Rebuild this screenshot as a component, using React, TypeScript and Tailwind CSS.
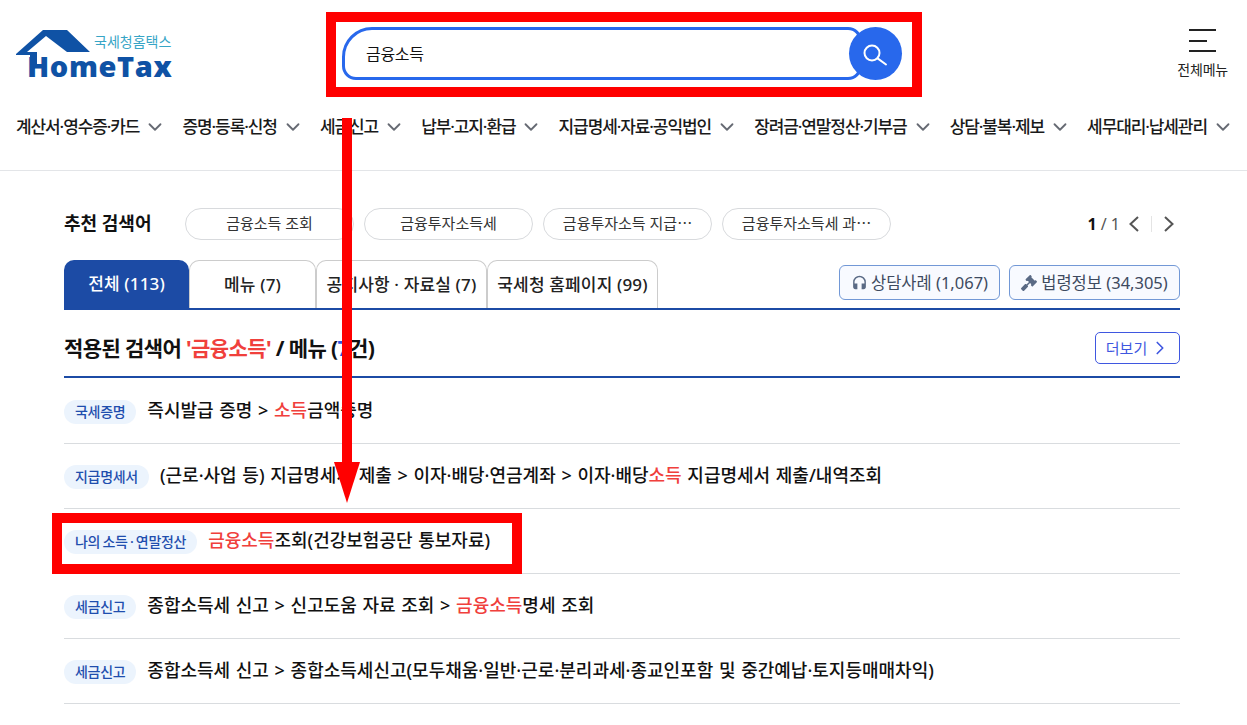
import { ChevronDown, ChevronRight } from "lucide-react";
import { FaGavel } from "react-icons/fa";
import { MdHeadset } from "react-icons/md";

const navItems = [
  "계산서·영수증·카드",
  "증명·등록·신청",
  "세금신고",
  "납부·고지·환급",
  "지급명세·자료·공익법인",
  "장려금·연말정산·기부금",
  "상담·불복·제보",
  "세무대리·납세관리",
];

const chips = ["금융소득 조회", "금융투자소득세", "금융투자소득 지급⋯", "금융투자소득세 과⋯"];

const tabs = [
  { label: "전체 (113)", width: "w-[125px]", active: true },
  { label: "메뉴 (7)", width: "w-[127px]", active: false },
  { label: "공지사항 · 자료실 (7)", width: "w-[171px]", active: false },
  { label: "국세청 홈페이지 (99)", width: "w-[171px]", active: false },
];

const results = [
  { tag: "국세증명", parts: ["즉시발급 증명 > ", "소득", "금액증명"] },
  { tag: "지급명세서", parts: ["(근로·사업 등) 지급명세서 제출 > 이자·배당·연금계좌 > 이자·배당", "소득", " 지급명세서 제출/내역조회"] },
  { tag: "나의 소득 · 연말정산", parts: ["", "금융소득", "조회(건강보험공단 통보자료)"] },
  { tag: "세금신고", parts: ["종합소득세 신고 > 신고도움 자료 조회 > ", "금융소득", "명세 조회"] },
  { tag: "세금신고", parts: ["종합소득세 신고 > 종합소득세신고(모두채움·일반·근로·분리과세·종교인포함 및 중간예납·토지등매매차익)", "", ""] },
];

function Logo() {
  return (
    <div className="relative h-[50px] w-[160px] shrink-0">
      <svg className="absolute left-0 top-0" width="92" height="50" viewBox="0 0 92 50">
        <path
          d="M0 25 L27 1 L51 1 L74 23 L51 23 L30 7 L11 23 L21 23 L21 35 L14 35 L14 26 L0 26 Z"
          fill="#0f52a5"
        />
      </svg>
      <span className="absolute left-[78px] top-[4px] text-[14px] leading-[18px] text-[#37a5c6]">
        국세청홈택스
      </span>
      <span className="absolute left-[11px] top-[25px] font-['Open_Sans'] text-[29px] font-extrabold leading-[24px] tracking-[0.6px] text-[#0f52a5]">
        HomeTax
      </span>
    </div>
  );
}

export default function App() {
  return (
    <div className="relative h-[725px] w-[1247px] overflow-hidden bg-white font-['Noto_Sans','Noto_Sans_CJK_KR',sans-serif] text-[#111]">
      {/* Header */}
      <header className="h-[171px] border-b border-[#e3e5e8]">
        <div className="flex h-[105px] items-start pl-[16px] pr-[19px]">
          <div className="mt-[29px]">
            <Logo />
          </div>
          <div className="ml-[166px] mt-[27px] flex h-[53px] w-[560px] items-center">
            <div className="flex h-[53px] w-[520px] items-center rounded-bl-[14px] rounded-br-[14px] rounded-tl-[30px] rounded-tr-[14px] border-[3px] border-[#2868ec] pl-[21px] text-[16px] tracking-[-0.3px]">
              금융소득
            </div>
            <div className="-ml-[13px] flex h-[53px] w-[53px] items-center justify-center rounded-full bg-[#2868ec]">
              <svg width="26" height="26" viewBox="0 0 26 26" fill="none" stroke="#fff" strokeWidth="2" strokeLinecap="round">
                <circle cx="9" cy="12" r="7.5" />
                <path d="M14.6 17.4 L23 23.5" />
              </svg>
            </div>
          </div>
          <div className="ml-auto mt-[29px] flex flex-col items-center">
            <div className="flex h-[23px] w-[27px] flex-col justify-between">
              <span className="h-[2px] w-full bg-[#222]" />
              <span className="h-[2px] w-[18px] bg-[#222]" />
              <span className="h-[2px] w-full bg-[#222]" />
            </div>
            <span className="mt-[9px] text-[14px] leading-[18px] tracking-[-0.2px] text-[#222]">전체메뉴</span>
          </div>
        </div>
        <nav className="mt-px flex justify-between pl-[16px] pr-[18px]">
          {navItems.map((item) => (
            <div key={item} className="flex h-[42px] items-center">
              <span className="text-[17px] font-medium tracking-[-1.1px] text-[#1a1a1a]">{item}</span>
              <ChevronDown size={22} strokeWidth={2} className="-mr-[5px] ml-[5px] text-[#666a73]" />
            </div>
          ))}
        </nav>
      </header>

      {/* Content */}
      <main className="pl-[64px] pr-[67px]">
        <div className="mt-[37px] flex h-[32px] items-center">
          <span className="w-[121px] pb-[1px] text-[18px] font-bold">추천 검색어</span>
          <div className="flex gap-[10px]">
            {chips.map((chip) => (
              <span
                key={chip}
                className="flex h-[32px] w-[169px] items-center justify-center rounded-full border border-[#d8dadd] pb-[2px] text-[15px] text-[#333]"
              >
                {chip}
              </span>
            ))}
          </div>
          <div className="ml-auto flex items-center text-[16px]">
            <b className="font-bold">1</b>
            <span className="ml-[4px] text-[#555]">/ 1</span>
            <svg className="ml-[8px]" width="12" height="16" viewBox="0 0 12 16" fill="none" stroke="#555" strokeWidth="2">
              <path d="M10 1 L2.5 8 L10 15" />
            </svg>
            <span className="ml-[11px] mr-[9px] h-[16px] w-px bg-[#e4e4e4]" />
            <svg className="ml-[2px] mr-[5px]" width="12" height="16" viewBox="0 0 12 16" fill="none" stroke="#555" strokeWidth="2">
              <path d="M2 1 L9.5 8 L2 15" />
            </svg>
          </div>
        </div>

        <div className="mt-[20px] flex h-[50px] items-end border-b-2 border-[#1c4ba5] pb-0">
          {tabs.map((tab) => (
            <div
              key={tab.label}
              className={`flex h-[48px] items-center justify-center rounded-t-[10px] text-[17px] font-medium tracking-[0.15px] ${tab.width} ${
                tab.active ? "bg-[#1c4ba5] text-white" : "border border-b-0 border-[#ccc] text-[#222]"
              }`}
            >
              {tab.label}
            </div>
          ))}
          <div className="mb-[8px] ml-auto flex gap-[9px]">
            <span className="flex h-[35px] w-[161px] items-center justify-center gap-[3px] rounded-[6px] border border-[#7298d6] bg-[#f8faff] pt-[1px] text-[16.5px] text-[#3e4a5f]">
              <MdHeadset size={17} className="text-[#5a6a85]" />
              상담사례 (1,067)
            </span>
            <span className="flex h-[35px] w-[171px] items-center justify-center gap-[4px] rounded-[6px] border border-[#7298d6] bg-[#f8faff] pt-[1px] text-[16.5px] text-[#3e4a5f]">
              <FaGavel size={16} className="text-[#5a6a85]" />
              법령정보 (34,305)
            </span>
          </div>
        </div>

        <div className="flex h-[68px] items-center justify-between border-b-2 border-[#1c4ba5] pt-[10px]">
          <h2 className="mt-[1px] text-[21px] font-bold tracking-[-0.6px]">
            적용된 검색어 <span className="text-[#f0403c]">'금융소득'</span> / 메뉴 (<span className="text-[#2c54e0]">7</span>건)
          </h2>
          <span className="flex h-[32px] w-[85px] items-center justify-center gap-[2px] rounded-[5px] border border-[#3f57e0] pl-[2px] text-[15px] text-[#3f57e0]">
            더보기
            <ChevronRight size={22} strokeWidth={1.8} />
          </span>
        </div>

        <ul className="mt-px">
          {results.map((row) => (
            <li key={row.parts.join("")} className="flex h-[65px] items-center gap-[11px] border-b border-[#d9dcdf]">
              <span className="mt-px flex h-[24px] items-center rounded-full bg-[#ecf4fd] px-[11px] text-[14px] font-medium tracking-[-0.3px] text-[#1f4eae] [word-spacing:-1px]">
                {row.tag}
              </span>
              <span className="-mt-[2px] text-[18px] font-medium text-[#111] [word-spacing:1px]">
                {row.parts[0]}
                <span className="text-[#f0403c]">{row.parts[1]}</span>
                {row.parts[2]}
              </span>
            </li>
          ))}
        </ul>
      </main>

      {/* Red annotations drawn over the page */}
      <div className="absolute left-[326px] top-[12px] h-[85px] w-[596px] border-[10px] border-[#ff0000]" />
      <div className="absolute left-[52px] top-[513px] h-[61px] w-[470px] border-[10px] border-[#ff0000]" />
      <svg className="absolute left-[330px] top-[118px]" width="34" height="386" viewBox="0 0 34 386">
        <rect x="12" y="0" width="10" height="346" fill="#ff0000" />
        <polygon points="4,344 30,344 17,385" fill="#ff0000" />
      </svg>
    </div>
  );
}
